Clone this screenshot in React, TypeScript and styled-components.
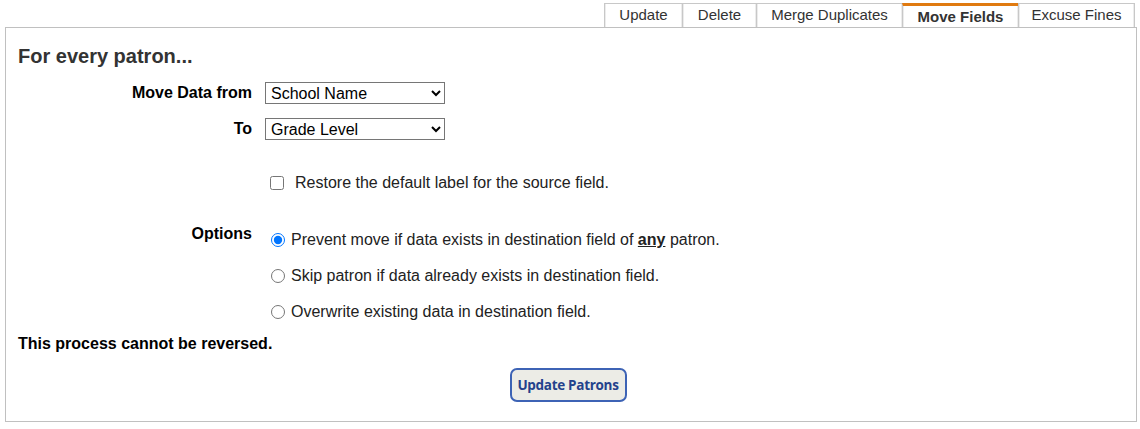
import React from "react";
import styled, { createGlobalStyle } from "styled-components";

const Global = createGlobalStyle`
  html, body { margin: 0; padding: 0; background: #fff; }
  body { font-family: "Liberation Sans", Arial, sans-serif; font-size: 16px; color: #000; }
`;

const Page = styled.div`
  padding: 3px 3px 0 5px;
  width: 1132px;
`;

const TabBar = styled.div`
  display: flex;
  justify-content: flex-end;
  padding-right: 2px;
`;

const Tab = styled.div<{ $active?: boolean; $w: number }>`
  box-sizing: border-box;
  width: ${(p) => p.$w}px;
  height: 24px;
  display: flex;
  align-items: center;
  justify-content: center;
  border: 1px solid #c8c8c8;
  border-bottom: none;
  border-top: ${(p) => (p.$active ? "3px solid #e07a10" : "1px solid #c8c8c8")};
  padding-bottom: ${(p) => (p.$active ? "1px" : "3px")};
  margin-left: -1px;
  background: #fff;
  color: #333;
  font-weight: ${(p) => (p.$active ? 700 : 400)};
  font-size: 15px;
  white-space: nowrap;
  box-shadow: inset 1px 0 0 #ececec, inset -1px 0 0 #ececec;
`;

const Panel = styled.div`
  box-sizing: border-box;
  border: 1px solid #c0c0c0;
  height: 395px;
  padding: 17px 12px 0 12px;
`;

const Heading = styled.h2`
  margin: 0;
  font-size: 20px;
  line-height: 23px;
  font-weight: 700;
  color: #333;
`;

const Form = styled.div`
  display: grid;
  grid-template-columns: 234px 1fr;
  column-gap: 13px;
  margin-top: 14px;
`;

const Label = styled.div<{ $top?: number }>`
  font-weight: 700;
  text-align: right;
  line-height: 18px;
  margin-top: ${(p) => p.$top ?? 2}px;
`;

const Cell = styled.div<{ $mb?: number }>`
  margin-bottom: ${(p) => p.$mb ?? 0}px;
`;

const Select = styled.select`
  display: block;
  width: 180px;
  height: 22px;
  font-family: "Liberation Sans", Arial, sans-serif;
  font-size: 16px;
  color: #000;
  border: 1px solid #767676;
  border-radius: 0;
  background: #fff;
  padding: 0 1px;
`;

const Check = styled.label<{ $ml?: number }>`
  display: flex;
  align-items: center;
  line-height: 18px;
  color: #222;
  input { margin: 0 ${(p) => (p.$ml ? 11 : 6)}px 0 ${(p) => p.$ml ?? 6}px; width: 14px; height: 14px; }
`;

const Stack = styled.div`
  display: flex;
  flex-direction: column;
  gap: 18px;
`;

const Note = styled.p`
  margin: 14px 0 0;
  font-weight: 700;
  line-height: 18px;
`;

const ButtonRow = styled.div`
  display: flex;
  justify-content: center;
  margin-top: 15px;
  padding-right: 6px;
`;

const Button = styled.button`
  height: 34px;
  width: 117px;
  border: 2px solid #3d63b5;
  border-radius: 7px;
  background: #ecece6;
  color: #23428c;
  font-family: "Open Sans", sans-serif;
  font-weight: 700;
  font-size: 13.5px;
  letter-spacing: -0.3px;
  padding: 0;
`;

const tabs = [
  { label: "Update", w: 79 },
  { label: "Delete", w: 75 },
  { label: "Merge Duplicates", w: 147 },
  { label: "Move Fields", w: 117, active: true },
  { label: "Excuse Fines", w: 117 },
];

export default function App() {
  return (
    <>
      <Global />
      <Page>
        <TabBar>
          {tabs.map((t) => (
            <Tab key={t.label} $w={t.w} $active={t.active}>
              {t.label}
            </Tab>
          ))}
        </TabBar>
        <Panel>
          <Heading>For every patron...</Heading>
          <Form>
            <Label>Move Data from</Label>
            <Cell $mb={14}>
              <Select defaultValue="School Name">
                <option>School Name</option>
                <option>Grade Level</option>
              </Select>
            </Cell>
            <Label>To</Label>
            <Cell $mb={34}>
              <Select defaultValue="Grade Level">
                <option>School Name</option>
                <option>Grade Level</option>
              </Select>
            </Cell>
            <div />
            <Cell $mb={39}>
              <Check $ml={5}>
                <input type="checkbox" />
                Restore the default label for the source field.
              </Check>
            </Cell>
            <Label $top={-6}>Options</Label>
            <Stack>
              <Check>
                <input type="radio" name="opt" defaultChecked />
                <span>
                  Prevent move if data exists in destination field of <b><u>any</u></b> patron.
                </span>
              </Check>
              <Check>
                <input type="radio" name="opt" />
                Skip patron if data already exists in destination field.
              </Check>
              <Check>
                <input type="radio" name="opt" />
                Overwrite existing data in destination field.
              </Check>
            </Stack>
          </Form>
          <Note>This process cannot be reversed.</Note>
          <ButtonRow>
            <Button>Update Patrons</Button>
          </ButtonRow>
        </Panel>
      </Page>
    </>
  );
}
